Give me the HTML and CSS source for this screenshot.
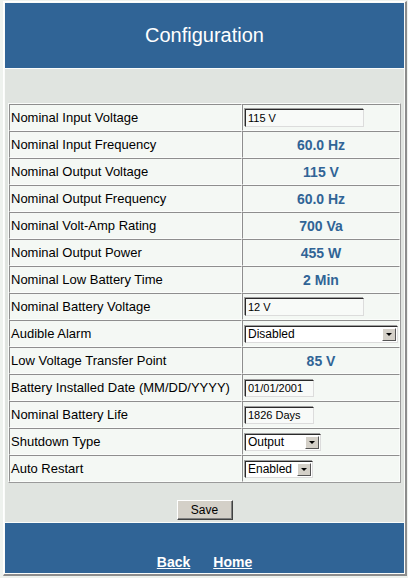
FILE: index.html
```html
<!DOCTYPE html>
<html lang="en">
  <head>
    <meta charset="UTF-8" />
    <meta name="viewport" content="width=device-width, initial-scale=1.0" />
    <title>Configuration</title>
    <link rel="stylesheet" href="styles.css">
  </head>
  <body>
    <div class="page">
      <div class="header">
        <h1>Configuration</h1>
      </div>

      <form class="content">
        <table class="config">
          <tr>
            <td class="label">Nominal Input Voltage</td>
            <td class="value"><input type="text" class="field wide" value="115 V" /></td>
          </tr>
          <tr>
            <td class="label">Nominal Input Frequency</td>
            <td class="value reading">60.0 Hz</td>
          </tr>
          <tr>
            <td class="label">Nominal Output Voltage</td>
            <td class="value reading">115 V</td>
          </tr>
          <tr>
            <td class="label">Nominal Output Frequency</td>
            <td class="value reading">60.0 Hz</td>
          </tr>
          <tr>
            <td class="label">Nominal Volt-Amp Rating</td>
            <td class="value reading">700 Va</td>
          </tr>
          <tr>
            <td class="label">Nominal Output Power</td>
            <td class="value reading">455 W</td>
          </tr>
          <tr>
            <td class="label">Nominal Low Battery Time</td>
            <td class="value reading">2 Min</td>
          </tr>
          <tr>
            <td class="label">Nominal Battery Voltage</td>
            <td class="value"><input type="text" class="field wide" value="12 V" /></td>
          </tr>
          <tr>
            <td class="label">Audible Alarm</td>
            <td class="value">
              <span class="select full">
                <select><option>Disabled</option><option>Enabled</option></select>
                <span class="arrow"><svg width="8" height="5" viewBox="0 0 8 5"><path d="M1 1h6L4 4z" fill="#000"/></svg></span>
              </span>
            </td>
          </tr>
          <tr>
            <td class="label">Low Voltage Transfer Point</td>
            <td class="value reading">85 V</td>
          </tr>
          <tr>
            <td class="label">Battery Installed Date (MM/DD/YYYY)</td>
            <td class="value"><input type="text" class="field short" value="01/01/2001" /></td>
          </tr>
          <tr>
            <td class="label">Nominal Battery Life</td>
            <td class="value"><input type="text" class="field short" value="1826 Days" /></td>
          </tr>
          <tr>
            <td class="label">Shutdown Type</td>
            <td class="value">
              <span class="select shutdown">
                <select><option>Output</option><option>UPS</option></select>
                <span class="arrow"><svg width="8" height="5" viewBox="0 0 8 5"><path d="M1 1h6L4 4z" fill="#000"/></svg></span>
              </span>
            </td>
          </tr>
          <tr>
            <td class="label">Auto Restart</td>
            <td class="value">
              <span class="select restart">
                <select><option>Enabled</option><option>Disabled</option></select>
                <span class="arrow"><svg width="8" height="5" viewBox="0 0 8 5"><path d="M1 1h6L4 4z" fill="#000"/></svg></span>
              </span>
            </td>
          </tr>
        </table>

        <div class="actions">
          <button type="submit" class="save-button">Save</button>
        </div>
      </form>

      <div class="footer">
        <a href="#">Back</a>
        <a href="#">Home</a>
      </div>
    </div>
  </body>
</html>
```

FILE: styles.css
```css
/* Page frame */
body {
  margin: 0;
  background: #eef2ee;
  font-family: "Liberation Sans", Arial, sans-serif;
}

.page {
  width: 399px;
  margin: 1px 0 0 3px;
  padding: 1px;
  background: #fafcfa;
  border: 1px solid;
  border-color: #fff #8c8c8c #8c8c8c #fff;
  border-right-width: 2px;
  border-bottom-width: 2px;
  display: flex;
  flex-direction: column;
  gap: 1px;
}

.header {
  height: 65px;
  background: #306496;
  display: flex;
  justify-content: center;
  align-items: center;
}

.header h1 {
  margin: 0;
  font-size: 20px;
  font-weight: normal;
  color: #fff;
}

/* Settings table */
.content {
  margin: 0;
  height: 453px;
  background: #e0e4e0;
  padding: 34px 3px 0;
  box-sizing: border-box;
}

.config {
  width: 393px;
  border-collapse: separate;
  border-spacing: 0;
  border: 1px solid;
  border-color: #fafcfa #9a9a9a #9a9a9a #fafcfa;
}

.config td {
  height: 25px;
  padding: 0;
  background: #f4f8f4;
  border: 1px solid;
  border-color: #8e8e8e #fbfdfb #fbfdfb #8e8e8e;
}

.config .label {
  width: 230px;
  padding-left: 1px;
  font-size: 13px;
  color: #000;
}

.config .value {
  padding-left: 2px;
}

.config .reading {
  padding-left: 0;
  text-align: center;
  font-size: 14px;
  font-weight: bold;
  color: #306496;
}

/* Form fields */
.field {
  box-sizing: border-box;
  height: 18px;
  margin: 0;
  padding: 0 2px;
  font-family: "Liberation Sans", Arial, sans-serif;
  font-size: 11px;
  color: #000;
  background: #f8faf8;
  border: 1px solid;
  border-color: #2a2a2a #dcdcdc #dcdcdc #2a2a2a;
  box-shadow: -1px -1px 0 #a0a0a0;
  vertical-align: middle;
}

.field.wide {
  width: 119px;
}

.field.short {
  width: 69px;
  height: 17px;
}

.select {
  box-sizing: border-box;
  display: inline-flex;
  align-items: center;
  height: 17px;
  background: #fff;
  border: 1px solid;
  border-color: #2a2a2a #dcdcdc #dcdcdc #2a2a2a;
  box-shadow: -1px -1px 0 #a0a0a0;
  vertical-align: middle;
}

.select select {
  flex: 1;
  min-width: 0;
  height: 15px;
  margin: 0;
  padding: 0 2px;
  border: none;
  background: transparent;
  font-family: "Liberation Sans", Arial, sans-serif;
  font-size: 12px;
  color: #000;
  appearance: none;
  -webkit-appearance: none;
  outline: none;
}

.select .arrow {
  box-sizing: border-box;
  width: 14px;
  height: 13px;
  margin-right: 1px;
  background: #d4d0c8;
  border: 1px solid;
  border-color: #fff #555 #555 #fff;
  display: flex;
  justify-content: center;
  align-items: center;
}

.select.full {
  width: 153px;
}

.select.shutdown {
  width: 76px;
}

.select.restart {
  width: 68px;
}

/* Save button */
.actions {
  display: flex;
  justify-content: center;
  margin-top: 17px;
}

.save-button {
  box-sizing: border-box;
  width: 56px;
  height: 20px;
  padding: 0;
  font-family: "Liberation Sans", Arial, sans-serif;
  font-size: 12px;
  color: #000;
  background: #d4d0c8;
  border: 1px solid;
  border-color: #fff #404040 #404040 #fff;
  box-shadow: inset -1px -1px 0 #808080;
  cursor: pointer;
}

/* Footer links */
.footer {
  height: 50px;
  box-sizing: border-box;
  background: #306496;
  display: flex;
  justify-content: center;
  align-items: flex-end;
  gap: 23px;
  padding-bottom: 3px;
}

.footer a {
  font-size: 14px;
  font-weight: bold;
  color: #fff;
}
```
